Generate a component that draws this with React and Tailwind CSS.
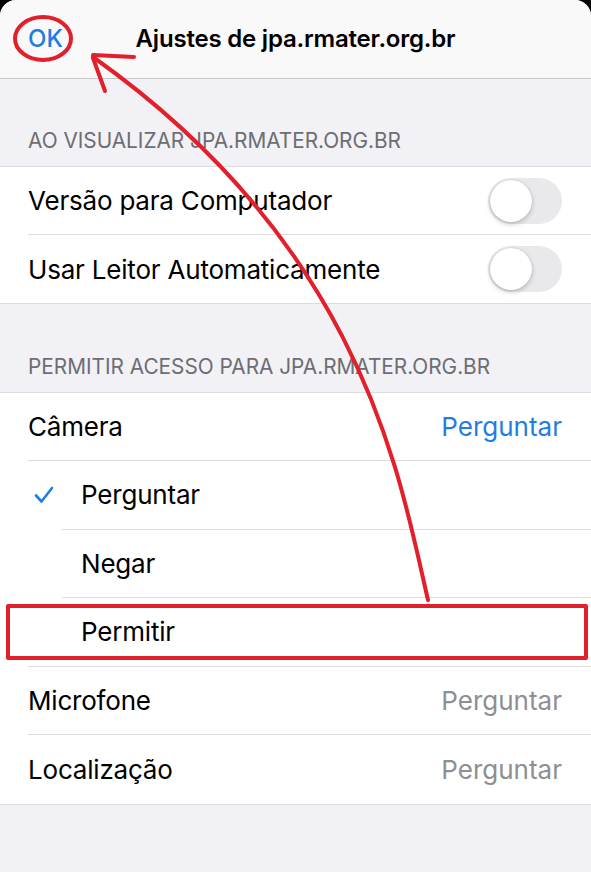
import React from "react";

const font = { fontFamily: "Inter, 'Liberation Sans', sans-serif" };

function Toggle() {
  return (
    <div className="relative w-[74px] h-[46px] rounded-full bg-[#e9e9eb]">
      <div className="absolute left-[2px] top-[2px] w-[42px] h-[42px] rounded-full bg-white shadow-[0_2px_5px_rgba(0,0,0,0.22),0_0_1px_rgba(0,0,0,0.2)]" />
    </div>
  );
}

function Row({ label, right, last, indent, checked, wideSep, h = "h-[68px]" }) {
  if (wideSep) {
    return (
      <div className={`flex ${h} bg-white pl-[28px]`}>
        <div className="flex-1 flex items-center pl-[53px] border-b border-[#dcdcdf]">
          <span className="text-[26px] text-black tracking-[-0.2px]">{label}</span>
        </div>
      </div>
    );
  }
  return (
    <div className={`flex ${h} bg-white`}>
      <div className={`${indent ? "w-[62px] pl-[34px]" : "w-[28px]"} shrink-0 flex items-center`}>
        {checked && (
          <svg width="20" height="18" viewBox="0 0 20 18">
            <path d="M2 9.5 L7.5 15.5 L18 2" fill="none" stroke="#1f7de3" strokeWidth="2.6" strokeLinecap="round" strokeLinejoin="round" />
          </svg>
        )}
      </div>
      <div className={`flex-1 flex items-center justify-between pr-[29px] ${indent ? "pl-[19px]" : ""} ${last ? "" : "border-b border-[#dcdcdf]"}`}>
        <span className="text-[26px] text-black tracking-[-0.2px]">{label}</span>
        {right}
      </div>
    </div>
  );
}

function SectionHeader({ children, h }) {
  return (
    <div className={`${h} flex items-end px-[28px] pb-[14px]`}>
      <span className="text-[20.8px] text-[#6d6d72] leading-none">{children}</span>
    </div>
  );
}

export default function App() {
  return (
    <div className="relative w-[591px] h-[872px] bg-black overflow-hidden" style={font}>
      <div className="h-full rounded-t-[16px] overflow-hidden bg-[#f1f1f6]">
        <div className="h-[79px] bg-[#f9f9f9] border-b border-[#c8c8cb] grid grid-cols-[1fr_auto_1fr] items-center">
          <div className="pl-[28px] text-[24px] font-medium text-[#1f7de3] leading-none">OK</div>
          <div className="text-[24px] font-semibold text-black tracking-[-0.2px]">Ajustes de jpa.rmater.org.br</div>
          <div />
        </div>
        <SectionHeader h="h-[87px]">AO VISUALIZAR JPA.RMATER.ORG.BR</SectionHeader>
        <div className="border-y border-[#dcdcdf]">
          <Row label="Versão para Computador" right={<Toggle />} />
          <Row label="Usar Leitor Automaticamente" right={<Toggle />} last />
        </div>
        <SectionHeader h="h-[88px]">PERMITIR ACESSO PARA JPA.RMATER.ORG.BR</SectionHeader>
        <div className="border-y border-[#dcdcdf]">
          <Row label="Câmera" right={<span className="text-[26px] text-[#1f7de3]">Perguntar</span>} />
          <Row label="Perguntar" indent checked h="h-[68.5px]" />
          <Row label="Negar" indent h="h-[68.5px]" />
          <Row label="Permitir" wideSep h="h-[68.5px]" />
          <Row label="Microfone" right={<span className="text-[26px] text-[#8e8e93]">Perguntar</span>} h="h-[68.5px]" />
          <Row label="Localização" right={<span className="text-[26px] text-[#8e8e93]">Perguntar</span>} last h="h-[68.5px]" />
        </div>
      </div>
      <svg className="absolute inset-0 pointer-events-none" width="591" height="872" viewBox="0 0 591 872">
        <g fill="none" stroke="#e2202b" strokeWidth="4" strokeLinecap="round" strokeLinejoin="round">
          <ellipse cx="43" cy="38.5" rx="28" ry="21.5" />
          <path d="M428 600 C 400 480, 365 250, 93 57" />
          <path d="M93 55 L134 57" />
          <path d="M93 58 L105 91" />
          <rect x="8" y="606" width="578" height="52" />
        </g>
      </svg>
    </div>
  );
}
